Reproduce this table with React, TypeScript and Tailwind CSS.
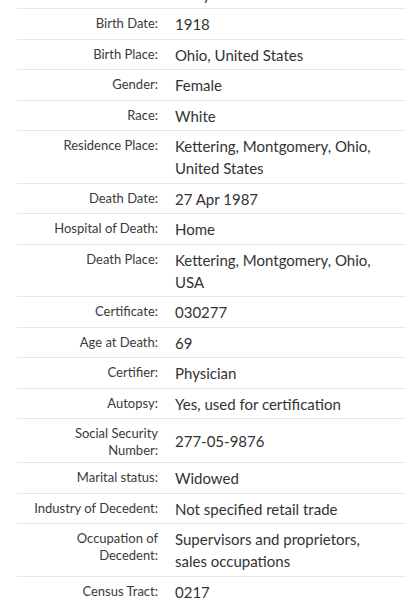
const rows: [string, string][] = [
  ["", "Betty J Patkins"],
  ["Birth Date:", "1918"],
  ["Birth Place:", "Ohio, United States"],
  ["Gender:", "Female"],
  ["Race:", "White"],
  ["Residence Place:", "Kettering, Montgomery, Ohio, United States"],
  ["Death Date:", "27 Apr 1987"],
  ["Hospital of Death:", "Home"],
  ["Death Place:", "Kettering, Montgomery, Ohio, USA"],
  ["Certificate:", "030277"],
  ["Age at Death:", "69"],
  ["Certifier:", "Physician"],
  ["Autopsy:", "Yes, used for certification"],
  ["Social Security Number:", "277-05-9876"],
  ["Marital status:", "Widowed"],
  ["Industry of Decedent:", "Not specified retail trade"],
  ["Occupation of Decedent:", "Supervisors and proprietors, sales occupations"],
  ["Census Tract:", "0217"],
]

const Row = ({ label, value }: { label: string; value: string }) => {
  return (
    <div className="flex border-b border-[#e8e8e8] pt-[4px] pb-[3px]">
      <div className="w-[141px] shrink-0 self-start pl-[8px] pt-[2px] text-right text-[13px] leading-[17px] text-[#3a3a3a]">
        {label}
      </div>
      <div className="flex-1 self-center pl-[17px] pr-[18px] text-[15px] leading-[22.4px] text-[#333]">
        {value}
      </div>
    </div>
  )
}

export default function App() {
  return (
    <div className="h-[605px] w-[410px] overflow-hidden bg-white" style={{ fontFamily: "Lato, 'Open Sans', sans-serif" }}>
      <div className="-mt-[21px] ml-[17px] mr-[4px]">
        {rows.map(([label, value]) => (
          <Row key={value} label={label} value={value} />
        ))}
      </div>
    </div>
  )
}
